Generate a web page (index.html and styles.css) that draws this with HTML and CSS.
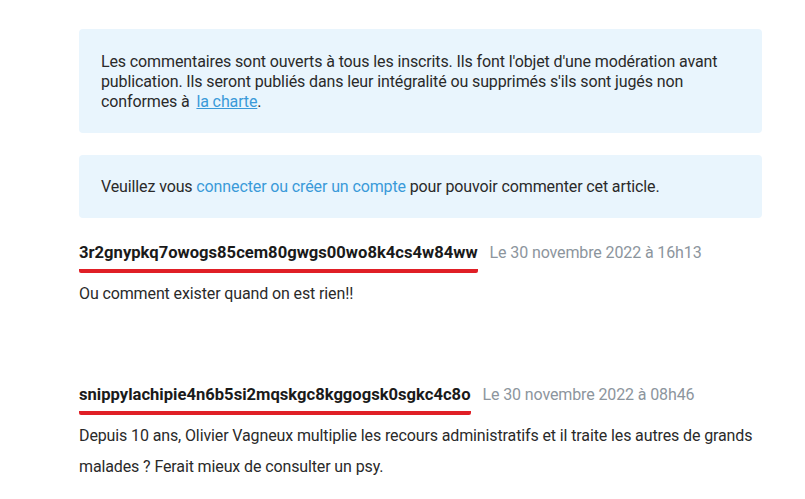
FILE: index.html
```html
<!DOCTYPE html>
<html lang="fr">
<head>
    <meta charset="UTF-8">
    <title>Commentaires</title>
    <link rel="stylesheet" href="styles.css">
</head>
<body>
    <div class="comments">
        <div class="notice">
            Les commentaires sont ouverts à tous les inscrits. Ils font l'objet d'une modération avant publication. Ils seront publiés dans leur intégralité ou supprimés s'ils sont jugés non conformes à <a class="charte" href="#">la charte</a>.
        </div>

        <div class="notice login">
            Veuillez vous <a href="#">connecter ou créer un compte</a> pour pouvoir commenter cet article.
        </div>

        <div class="comment">
            <div class="comment-head">
                <span class="author">3r2gnypkq7owogs85cem80gwgs00wo8k4cs4w84ww</span>
                <span class="date">Le 30 novembre 2022 à 16h13</span>
            </div>
            <p class="comment-text">Ou comment exister quand on est rien!!</p>
        </div>

        <div class="comment">
            <div class="comment-head">
                <span class="author">snippylachipie4n6b5si2mqskgc8kggogsk0sgkc4c8o</span>
                <span class="date">Le 30 novembre 2022 à 08h46</span>
            </div>
            <p class="comment-text">Depuis 10 ans, Olivier Vagneux multiplie les recours administratifs et il traite les autres de grands malades ? Ferait mieux de consulter un psy.</p>
        </div>
    </div>
</body>
</html>
```

FILE: styles.css
```css
body {
    margin: 0;
    background: #fff;
    color: #2a2a2a;
    font-family: "Roboto", "Liberation Sans", sans-serif;
    font-size: 16px;
    letter-spacing: -0.12px;
}

.comments {
    width: 683px;
    margin-left: 79px;
    padding-top: 29px;
}

.notice {
    background-color: #e9f5fd;
    border-radius: 4px;
    padding: 23px 22px 21px;
    line-height: 20px;
    margin-bottom: 22px;
}

.notice.login {
    padding: 22px 22px 21px;
    margin-bottom: 25px;
}

.notice a {
    color: #3a9ad9;
    text-decoration: none;
}

.notice a.charte {
    margin-left: 3px;
    text-decoration: underline;
}

.comment-head {
    display: flex;
    align-items: baseline;
    gap: 12px;
}

.author {
    font-weight: 700;
    font-size: 16.6px;
    line-height: 20px;
    letter-spacing: 0;
    color: #1a1a1a;
    padding-bottom: 6px;
    border-bottom: 4px solid #e01f26;
    border-radius: 2px;
}

.date {
    color: #8c959d;
}

.comment-text {
    margin: 5px 0 76px;
    line-height: 31px;
}
```
